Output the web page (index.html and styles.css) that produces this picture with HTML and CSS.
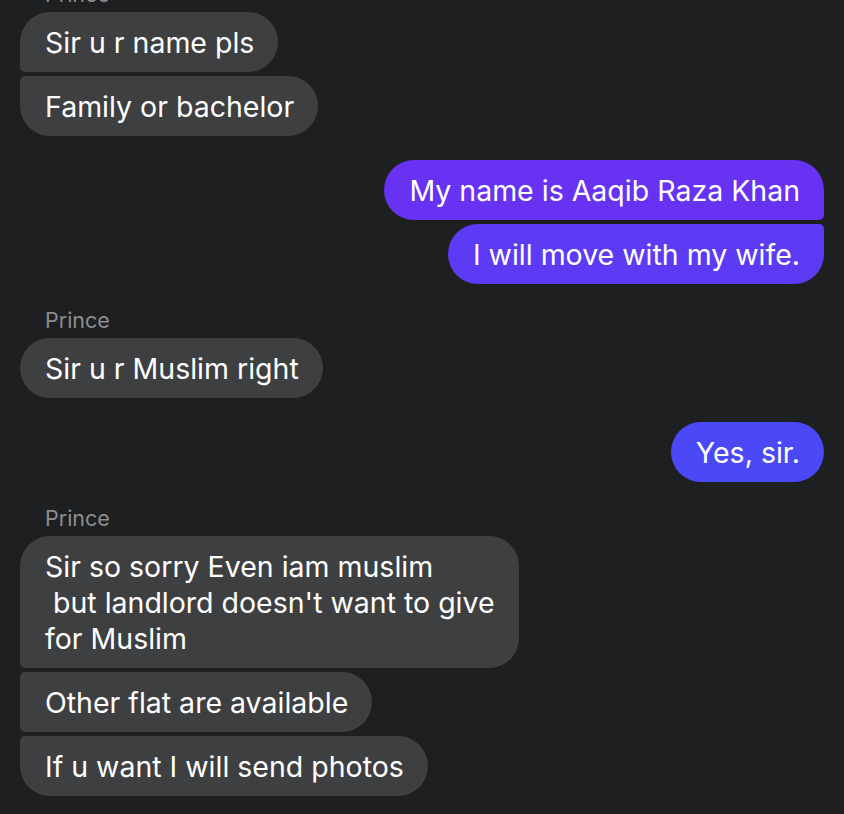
FILE: index.html
```html
<!DOCTYPE html>
<html>
<head>
<meta charset="utf-8">
<link rel="stylesheet" href="styles.css">
</head>
<body>
<div class="thread">
  <div class="group in">
    <div class="name">Prince</div>
    <div class="bubble first">Sir u r name pls</div>
    <div class="bubble last">Family or bachelor</div>
  </div>
  <div class="group out">
    <div class="bubble first c1">My name is Aaqib Raza Khan</div>
    <div class="bubble last c2">I will move with my wife.</div>
  </div>
  <div class="group in">
    <div class="name">Prince</div>
    <div class="bubble">Sir u r Muslim right</div>
  </div>
  <div class="group out">
    <div class="bubble c3">Yes, sir.</div>
  </div>
  <div class="group in">
    <div class="name">Prince</div>
    <div class="bubble first multi">Sir so sorry Even iam muslim<br>&nbsp;but landlord doesn't want to give<br>for Muslim</div>
    <div class="bubble mid">Other flat are available</div>
    <div class="bubble last">If u want I will send photos</div>
  </div>
</div>
</body>
</html>
```
FILE: styles.css
```css
html, body {
  margin: 0;
  padding: 0;
  background: #1e1f21;
  overflow: hidden;
}
body {
  font-family: Inter, "Noto Sans", sans-serif;
  color: #fff;
}
.thread {
  display: flex;
  flex-direction: column;
  gap: 24px;
  padding: 0 20px;
  margin-top: -18px;
}
.group {
  display: flex;
  flex-direction: column;
  gap: 4px;
}
.group.in { align-items: flex-start; }
.group.out { align-items: flex-end; }
.name {
  font-size: 21.5px;
  line-height: 24px;
  color: #8b8d90;
  padding-left: 25px;
  margin-bottom: 2px;
}
.bubble {
  font-size: 28.5px;
  line-height: 36px;
  padding: 13px 24px 11px 25px;
  border-radius: 30px;
  background: #3e3f41;
  white-space: nowrap;
}
.in .bubble.first { border-bottom-left-radius: 5px; }
.in .bubble.mid { border-top-left-radius: 5px; border-bottom-left-radius: 5px; }
.in .bubble.last { border-top-left-radius: 5px; }
.out .bubble.first { border-bottom-right-radius: 5px; }
.out .bubble.last { border-top-right-radius: 5px; }
.c1 { background: #6732f2; }
.c2 { background: #5d3bf5; }
.c3 { background: #4a49f5; }
```
